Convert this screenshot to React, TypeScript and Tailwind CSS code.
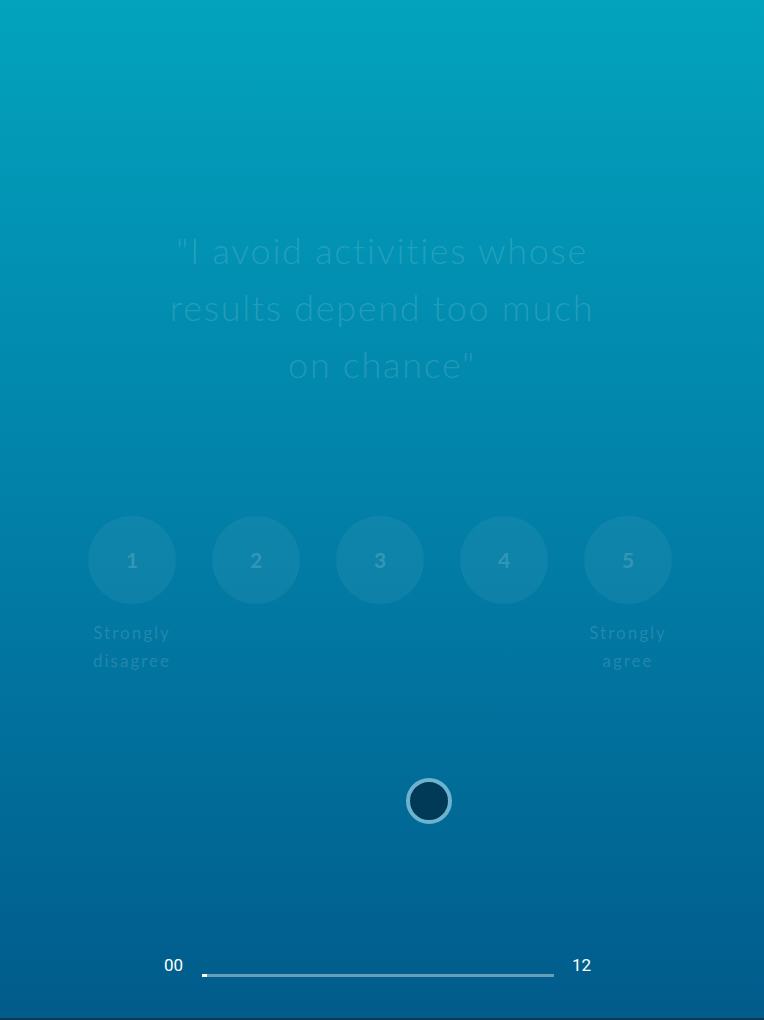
import React from 'react';

const OPTIONS = [
  { value: 1, label: ['Strongly', 'disagree'] },
  { value: 2, label: [] },
  { value: 3, label: [] },
  { value: 4, label: [] },
  { value: 5, label: ['Strongly', 'agree'] },
];

const FONT = { fontFamily: 'Lato, "Noto Sans", sans-serif' };

export default function App() {
  return (
    <div
      className="w-[764px] h-[1020px] flex flex-col bg-gradient-to-b from-[#03a3bd] via-[#0280a8] to-[#015b8b] text-white overflow-hidden"
      style={FONT}
    >
      {/* question */}
      <div className="pt-[222px] flex justify-center">
        <p className="w-[440px] text-center text-[36px] leading-[57px] font-light tracking-[1.7px] text-white/[0.15]">
          "I avoid activities whose results depend too much on chance"
        </p>
      </div>

      {/* scale */}
      <div className="mt-[123px] flex justify-center gap-[36px] pr-[4px]">
        {OPTIONS.map((o) => (
          <div key={o.value} className="w-[88px] flex flex-col items-center">
            <div className="w-[88px] h-[88px] rounded-full bg-white/[0.05] flex items-center justify-center text-[21px] font-bold text-white/[0.17]">
              {o.value}
            </div>
            <div className="mt-[15px] text-[17px] leading-[28px] tracking-[2px] text-center text-white/[0.15] whitespace-nowrap">
              {o.label.map((l) => (
                <div key={l}>{l}</div>
              ))}
            </div>
          </div>
        ))}
      </div>

      {/* drag handle */}
      <div className="mt-[103px] flex justify-center pl-[94px]">
        <div className="w-[46px] h-[46px] rounded-full border-[4px] border-[#6db2cf] bg-[#003a56]" />
      </div>

      {/* progress */}
      <div
        className="mt-[129px] flex items-center justify-center gap-[16px] pr-[8px] text-[17px] text-white"
        style={{ fontFamily: 'Roboto, sans-serif' }}
      >
        <span className="w-[22px]">00</span>
        <div className="relative mt-[19px] w-[352px] h-[3px] bg-white/40">
          <div className="absolute left-0 top-0 h-[3px] w-[5px] bg-white" />
        </div>
        <span className="w-[22px] pl-[2px]">12</span>
      </div>

      <div className="flex-1" />
      <div className="h-[2px] bg-[#0b3a52]" />
    </div>
  );
}
